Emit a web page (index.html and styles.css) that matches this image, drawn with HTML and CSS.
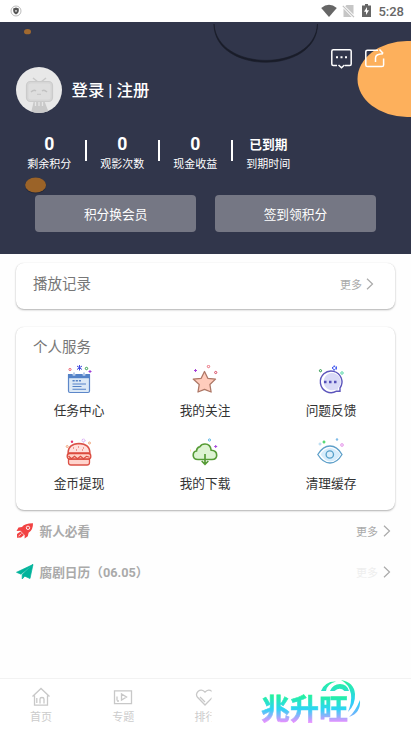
FILE: index.html
```html
<!DOCTYPE html>
<html lang="zh-CN">
<head>
<meta charset="utf-8">
<title>我的</title>
<link rel="stylesheet" href="styles.css">
</head>
<body>
<div class="screen">
  <div class="status">
    <svg class="status-app" width="12" height="12" viewBox="0 0 12 12"><circle cx="6" cy="6" r="5" fill="none" stroke="#aaa" stroke-width=".8"/><path d="M6 2.500 8.800 3.500V6Q8.600 8.400 6 9.600 3.400 8.400 3.200 6V3.500Z" fill="#555"/><path d="M5 5h2v1.800H5z" fill="#bbb"/></svg>
    <div class="status-right">
      <svg width="16" height="14" viewBox="0 0 16 14"><path d="M.2 4Q8-2.400 15.800 4L8 13Z" fill="#666"/></svg>
      <svg class="sim" width="13" height="14" viewBox="0 0 13 14"><path d="M4.500 1H11.500v9.500L3.200 2.300Z M1.500 4.500 9.700 13H1.500Z" fill="#c6c6c6"/><path d="m.8 1.800 11.200 11.400" stroke="#c0c0c0" stroke-width="1.200"/></svg>
      <svg class="battery" width="9" height="14" viewBox="0 0 9 14"><path d="M3 0h3v1.400h3V13H0V1.400h3Z" fill="#666"/><path d="M5 3 2 7.800h2V11l3-4.800H5Z" fill="#fff"/></svg>
      <span class="time">5:28</span>
    </div>
  </div>

  <header class="hero">
    <svg class="hero-art" width="411" height="232" viewBox="0 0 411 232">
      <ellipse cx="27.500" cy="9.700" rx="3.500" ry="2.600" fill="#a1692f"/>
      <path d="M214 2C214 53 317.500 53 317.500 2 315 50.500 217 50.500 214 2Z" fill="#191c29" stroke="#191c29" stroke-width=".6"/>
      <ellipse cx="407" cy="57" rx="49.500" ry="38" fill="#fdb05c"/>
      <ellipse cx="35.600" cy="163.600" rx="10.600" ry="8" fill="#252a3b"/>
      <ellipse cx="35.600" cy="163" rx="10.500" ry="7.600" fill="#9b6328"/>
    </svg>
    <div class="actions">
      <svg width="21" height="20" viewBox="0 0 21 20" fill="none" stroke="#fff" stroke-width="1.500"><path d="M6 16.500H2.300Q.8 16.500.8 15V2.200Q.8.8 2.300.8h16.400q1.500 0 1.500 1.400V15q0 1.500-1.500 1.500H14M7.500 16l3 2.800 3-2.800"/><path d="M5 8.300h2m2.500 0h2m2.500 0h2" stroke-width="2"/></svg>
      <svg width="20" height="20" viewBox="0 0 20 20" fill="none" stroke="#fff" stroke-width="1.500"><path d="M13 1.300H2.600Q.8 1.300.8 3v13q0 1.600 1.800 1.600h14.200q1.800 0 1.800-1.600V9.500"/><path d="M10.500 13V9Q10.500 5 18 4.800M14.500 .6l3.700 4"/></svg>
    </div>
    <div class="profile">
      <svg width="46" height="46" viewBox="0 0 46 46"><clipPath id="face"><circle cx="23" cy="23" r="23"/></clipPath><g clip-path="url(#face)"><path d="M0 0h46v46H0z" fill="#e8e8e8"/><path d="M18 33h10l5 13H15Z" fill="#c9c9c9"/><path d="M19.500 35v4m3.500-4v4m3.500-4v4" stroke="#e6e6e6" stroke-width="1.300"/><path d="m17 11 5 4m8-4-5 4" stroke="#c9c9c9" stroke-width="1.500"/><rect x="10.500" y="14.500" width="26" height="20" rx="4" fill="#d6d6d6" stroke="#cbcbcb" stroke-width="1.200"/><rect x="12.500" y="16.500" width="22" height="16" rx="2.500" fill="#dedede"/><path d="M15 25q3-3 5-1m6 0q2-2 5 1" fill="none" stroke="#c2c2c2" stroke-width="1.300"/><path d="M21 27q1 1 2 0 1 1 2 0" fill="none" stroke="#c4c4c4"/></g></svg>
      <span class="login">登录 | 注册</span>
    </div>
    <div class="stats">
      <div class="stat"><b>0</b><span>剩余积分</span></div>
      <div class="stat"><b>0</b><span>观影次数</span></div>
      <div class="stat"><b>0</b><span>现金收益</span></div>
      <div class="stat"><b class="expired">已到期</b><span>到期时间</span></div>
    </div>
    <div class="buttons"><div class="button">积分换会员</div><div class="button">签到领积分</div></div>
  </header>

  <main>
    <section class="card history">
      <h2>播放记录</h2>
      <div class="more">更多<svg width="8" height="12" viewBox="0 0 8 12"><path d="m1 .8 5.500 5.200L1 11.200"/></svg></div>
    </section>
    <section class="card services">
      <h2>个人服务</h2>
      <div class="grid">
        <div class="service">
          <svg width="30" height="30" viewBox="0 0 30 30"><path d="M4.500 10h21v16q0 1.500-1.500 1.500H6Q4.500 27.500 4.500 26Z" fill="#dce9f6" stroke="#5d87c9" stroke-width="1.200"/><path d="M4 9h22v4.200H4z" fill="#5482c7"/><path d="M8.500 15.800h8.500" stroke="#5482c7" stroke-width="1.500" stroke-dasharray="2.200 1"/><path d="M8.500 19h13.500m-13.500 2.500h9m-9 2.700h13.500" stroke="#5482c7" stroke-width="1.100"/><path d="M10 7.500v3m10-3v3" stroke="#fff" stroke-width="2.600"/><path d="M10 7.500v3m10-3v3" stroke="#85a9dc" stroke-width="1.200"/><path d="M15.500 0v5.500M13 1l5 3.500m0-3.500-5 3.500" stroke="#3e48df" stroke-width="1"/><circle cx="6" cy="4.500" r="1.100" fill="none" stroke="#ee6675"/><circle cx="22.500" cy="3.500" r="1.200" fill="none" stroke="#329b4d"/><path d="M26 5v3m-1.500-1.500h3" stroke="#9c3bd6"/></svg>
          <span>任务中心</span></div>
        <div class="service">
          <svg width="30" height="30" viewBox="0 0 30 30"><path d="m14.500 6.500 3.300 6.800 7.700.8-5.600 5.400 1.200 7.500-6.600-2.600L8 27l1.200-7.500-6-5.400 8-.8Z" fill="#ffccbc" stroke="#ad7766" stroke-width="1.300" stroke-linejoin="round"/><circle cx="18.500" cy="1.500" r="1.200" fill="none" stroke="#ea6b7a"/><circle cx="25.700" cy="7.500" r="1.100" fill="none" stroke="#d94862"/><path d="M5.500 4v3M4 5.500h3" stroke="#a642d8"/></svg>
          <span>我的关注</span></div>
        <div class="service talk">
          <svg width="30" height="30" viewBox="0 0 30 30"><path d="M25 23a10.800 10.800 0 1 0-3.500 3.200H25Z" fill="#fff" stroke="#5c55bc" stroke-width="1.400"/><path d="M23 23a8.600 8.600 0 1 0-3 1.800h3Z" fill="#d9daf7"/><path d="M9 17h2.500m2.500 0h2.500m2.500 0h2.500" stroke="#5550b8" stroke-width="2.300"/><circle cx="19.500" cy="3" r="1.800" fill="none" stroke="#3d55ed" stroke-width="1.500" stroke-dasharray="1.500 .7"/><circle cx="5.500" cy="5.700" r="1.100" fill="none" stroke="#279548"/><circle cx="27" cy="8" r="1.300" fill="#bbf2dd" stroke="#79dfb8"/></svg>
          <span>问题反馈</span></div>
        <div class="service">
          <svg width="30" height="30" viewBox="0 0 30 30"><path d="M4 15Q4 6 15 5.500 26 6 26 15Z" fill="#ffe0dd" stroke="#db5147" stroke-width="1.300"/><path d="M4.500 21h21v3.500q0 2.500-2.500 2.500H7q-2.500 0-2.500-2.500Z" fill="#ffd4cd" stroke="#db5147" stroke-width="1.300"/><rect x="3.200" y="15.500" width="23.600" height="5.500" rx="2.500" fill="#ffd0c6" stroke="#db4a3e" stroke-width="1.300"/><path d="m4.500 18 3 2.800 3-2.500 3 2.500 3-2.500 3 2.500 3-2.500 3 1" fill="none" stroke="#db4a3e" stroke-width="1.200"/><path d="M9 10h1m4-1h1m4 1h1m-8 2h1m5 0h1" stroke="#db5147" stroke-width="1.100"/><circle cx="3.200" cy="8.500" r="1" fill="none" stroke="#f0a87e"/><circle cx="25.500" cy="5" r="1" fill="none" stroke="#f0a87e"/><circle cx="8" cy="3.700" r="1.200" fill="#e63671"/><circle cx="19.500" cy="2.500" r="1.500" fill="none" stroke="#ce8bef" stroke-dasharray="1 .6"/></svg>
          <span>金币提现</span></div>
        <div class="service">
          <svg width="30" height="30" viewBox="0 0 30 30"><path d="M8 21.500Q3.200 21.500 3.200 17.200 3.200 13.500 6.500 13 6.700 9.500 9.800 8.800 11.500 6 15 6q5.500 0 6.200 6.300 5.500.2 5.500 5 0 4.200-4.700 4.200Z" fill="#ddf3d2" stroke="#559b35" stroke-width="1.600"/><path d="M15 16v10m-3.300-3 3.300 3.300 3.300-3.300" fill="none" stroke="#559b35" stroke-width="1.700"/><circle cx="19.500" cy="2" r="1.100" fill="none" stroke="#5eb7e6"/><path d="M25.700 7v3m-1.500-1.500h3" stroke="#a64bdc"/><path d="M.5 11.500v2" stroke="#ffe0b2"/></svg>
          <span>我的下载</span></div>
        <div class="service talk">
          <svg width="30" height="30" viewBox="0 0 30 30"><path d="M2.800 16.500Q8 8 15 8t12 8.500Q22 25 15 25T2.800 16.500Z" fill="#fff" stroke="#5d9fc9" stroke-width="1.300"/><path d="M5.500 16.500Q9.500 10 15 10t10.500 6.500Q20 24 15 23.500T5.500 16.500Z" fill="#d6ecfb"/><circle cx="14.800" cy="16.500" r="3.700" fill="#dceefa" stroke="#559fc9" stroke-width="1.300"/><circle cx="5" cy="6" r="1" fill="none" stroke="#a9d5ef"/><circle cx="22" cy="1.500" r="1.200" fill="#7fbbe8"/><path d="M9 2.500v3M7.500 4h3" stroke="#30d056" stroke-width="1.200"/><circle cx="27" cy="7" r="1.400" fill="#f8d4fa" stroke="#e8a5ed"/></svg>
          <span>清理缓存</span></div>
      </div>
    </section>
    <div class="link-row">
      <svg width="18" height="16" viewBox="0 0 18 16"><path d="M17 .3Q9 .2 6 4L2.500 4.600.5 8l4-.2 4.200 4.500-.1 3.200 3.200-2.200.8-3.500Q17.200 7 17 .3Z" fill="#f14343"/><circle cx="12" cy="4.800" r="1.700" fill="none" stroke="#fff" stroke-width=".9"/><path d="M4.500 8.500 1 11v3.800l4-.4 3-2.500Z" fill="#f14343"/><path d="m5.300 10.500-2.800 2.800" stroke="#fff" stroke-width=".8"/></svg>
      <span class="link-title">新人必看</span><div class="more">更多<svg width="8" height="12" viewBox="0 0 8 12"><path d="m1 .8 5.500 5.200L1 11.200"/></svg></div>
    </div>
    <div class="link-row faded">
      <svg width="18" height="16" viewBox="0 0 18 16"><path d="M17 .5.500 8.300 5 10.200ZM17 .5 6.200 10.600V15L8.800 12.200 14 14.500Z" fill="#00b39b" stroke="#00b39b" stroke-width=".7"/></svg>
      <span class="link-title">腐剧日历（06.05）</span><div class="more"><span>更多</span><svg width="8" height="12" viewBox="0 0 8 12"><path d="m1 .8 5.500 5.200L1 11.200"/></svg></div>
    </div>
  </main>

  <nav class="tabs">
    <div class="tab"><svg width="20" height="20" viewBox="0 0 20 20"><path d="M1.500 9.500 10 1.500l8.500 8M3.500 8.500v9.700h13V8.500M5.800 11v5M9 16.500V12q0-1.500 2-1.500t2 1.500v4.500"/></svg>首页</div>
    <div class="tab"><svg width="20" height="20" viewBox="0 0 20 20"><path d="M1.500 3.800h17v12.800h-17ZM8.500 7v6l5-3ZM4 9.500v4m0 .5h2"/></svg>专题</div>
    <div class="tab"><svg width="20" height="20" viewBox="0 0 20 20"><path d="M10 18 2.500 10.300C-1 6.500 5.500-.5 10 5.200 14.500-.5 21 6.500 17.500 10.300ZM5 10l5 5"/></svg>排行</div>
  </nav>
  <div class="brand">
    <svg width="112" height="50" viewBox="0 0 112 50"><defs><linearGradient id="aqua" gradientUnits="userSpaceOnUse" x1="0" y1="0" x2="0" y2="40"><stop offset="0" stop-color="#27f39a"/><stop offset=".55" stop-color="#2bd0f7"/><stop offset="1" stop-color="#8da8ff"/></linearGradient></defs><path d="M63 11Q67 1 78 1.500 69 4 68 11ZM72 11Q75 4 82 4T91 11H86.500Q82 6.500 76.500 11ZM83 0Q96 2 97 14 97.500 25 90 32 94 22 93 14 91 4 83 0ZM102 20q1 13-11 17 6-5 11-17Z" fill="url(#aqua)"/></svg>
    <span class="brand-text">兆升旺</span>
  </div>
</div>
</body>
</html>
```
FILE: styles.css
```css
* { box-sizing: border-box; }
body { margin: 0; background: #fff; font-family: Roboto, "Noto Sans CJK SC", sans-serif; }
svg { display: block; flex: none; }
.screen { position: relative; width: 411px; height: 730px; overflow: hidden; background: #fefefe; display: flex; flex-direction: column; }
.status { height: 22px; flex: none; display: flex; justify-content: space-between; padding: 0 7px 0 10px; background: #fff; }
.status-app { margin-top: 5px; }
.status-right { display: flex; align-items: flex-start; padding-top: 4px; }
.sim { margin-left: 5px; }
.battery { margin-left: 7px; }
.time { margin-left: 7px; font-size: 13px; line-height: 15px; font-weight: 500; color: #666; }

.hero { position: relative; height: 231.500px; flex: none; background: #31364b; color: #fff; overflow: hidden; }
.hero-art { position: absolute; inset: 0; }
.actions { position: absolute; right: 26px; top: 27px; display: flex; gap: 13px; }
.profile { position: relative; display: flex; align-items: center; gap: 9.500px; padding: 45px 0 0 16px; }
.login { font-size: 16.400px; line-height: 24px; font-weight: 500; padding-top: 1px; }
.stats { position: relative; display: flex; padding: 21px 0 0 12.800px; }
.stat { position: relative; width: 73px; display: flex; flex-direction: column; align-items: center; font-size: 11px; line-height: 16px; }
.stat b { height: 22px; font-size: 17.600px; line-height: 21px; font-weight: 700; }
.stat .expired { font-size: 12.700px; line-height: 22px; font-weight: 700; }
.stat span { padding-top: 1px; }
.stat:not(:last-child)::after { content: ""; position: absolute; right: -1.200px; top: 6px; width: 2px; height: 21px; background: #fff; }
.buttons { position: relative; display: flex; gap: 18.500px; padding: 22px 35px 0; }
.button { flex: 1; height: 37px; border-radius: 4px; background: #757784; display: flex; align-items: center; justify-content: center; font-size: 12.700px; }

main { flex: 1; padding: 9px 16px 0; }
.card { background: #fff; border-radius: 8px; box-shadow: 0 1px 2px rgba(0, 0, 0, .3), 0 0 1px rgba(0, 0, 0, .1); }
h2 { margin: 0; font-size: 14.500px; line-height: 22px; font-weight: 400; color: #777; }
.history { height: 46.500px; display: flex; justify-content: space-between; padding: 11px 21px 0 17px; }
.more { display: flex; align-items: center; gap: 4px; height: 22px; font-size: 11px; color: #aaa; }
.history .more { height: 20px; }
.more path { fill: none; stroke: #aaa; stroke-width: 1.200; }
.services { height: 183px; margin-top: 18px; padding-top: 10px; }
.services h2 { padding-left: 17px; }
.grid { display: grid; grid-template-columns: repeat(3, 126px); grid-auto-rows: 73px; padding-top: 6px; }
.service { display: flex; flex-direction: column; align-items: center; font-size: 12.700px; line-height: 20px; color: #333; }
.service span { margin-top: 6px; }
.talk svg { margin-right: 2px; }
.link-row { display: flex; align-items: center; height: 22px; margin-top: 9.500px; padding-right: 4px; }
.link-row + .link-row { margin-top: 19px; }
.link-title { margin-left: 5.500px; font-size: 12.700px; font-weight: 700; color: #aaa; }
.link-row .more { margin-left: auto; gap: 5px; }
.faded .more span { color: #eee; }

.tabs { height: 52px; flex: none; width: 100%; display: flex; border-top: 1px solid #f2f2f2; background: #fff; }
.tab { width: 82.200px; display: flex; flex-direction: column; align-items: center; padding-top: 8px; font-size: 11px; line-height: 22px; color: #ccc; }
.tab:nth-child(3) { clip-path: inset(0 35px 0 0); }
.tab path { fill: none; stroke: #c8c8c8; stroke-width: 1.300; }
.brand { position: absolute; left: 258px; top: 680px; width: 112px; height: 50px; }
.brand-text { position: absolute; left: 3px; top: 11px; font-size: 29px; line-height: 38px; font-weight: 700; color: transparent; background: linear-gradient(#24f39a 10%, #2dd4f5 48%, #e890ff 82%); background-clip: text; -webkit-background-clip: text; -webkit-text-stroke: .6px transparent; }
.brand svg { position: absolute; left: 0; top: 0; }
```
